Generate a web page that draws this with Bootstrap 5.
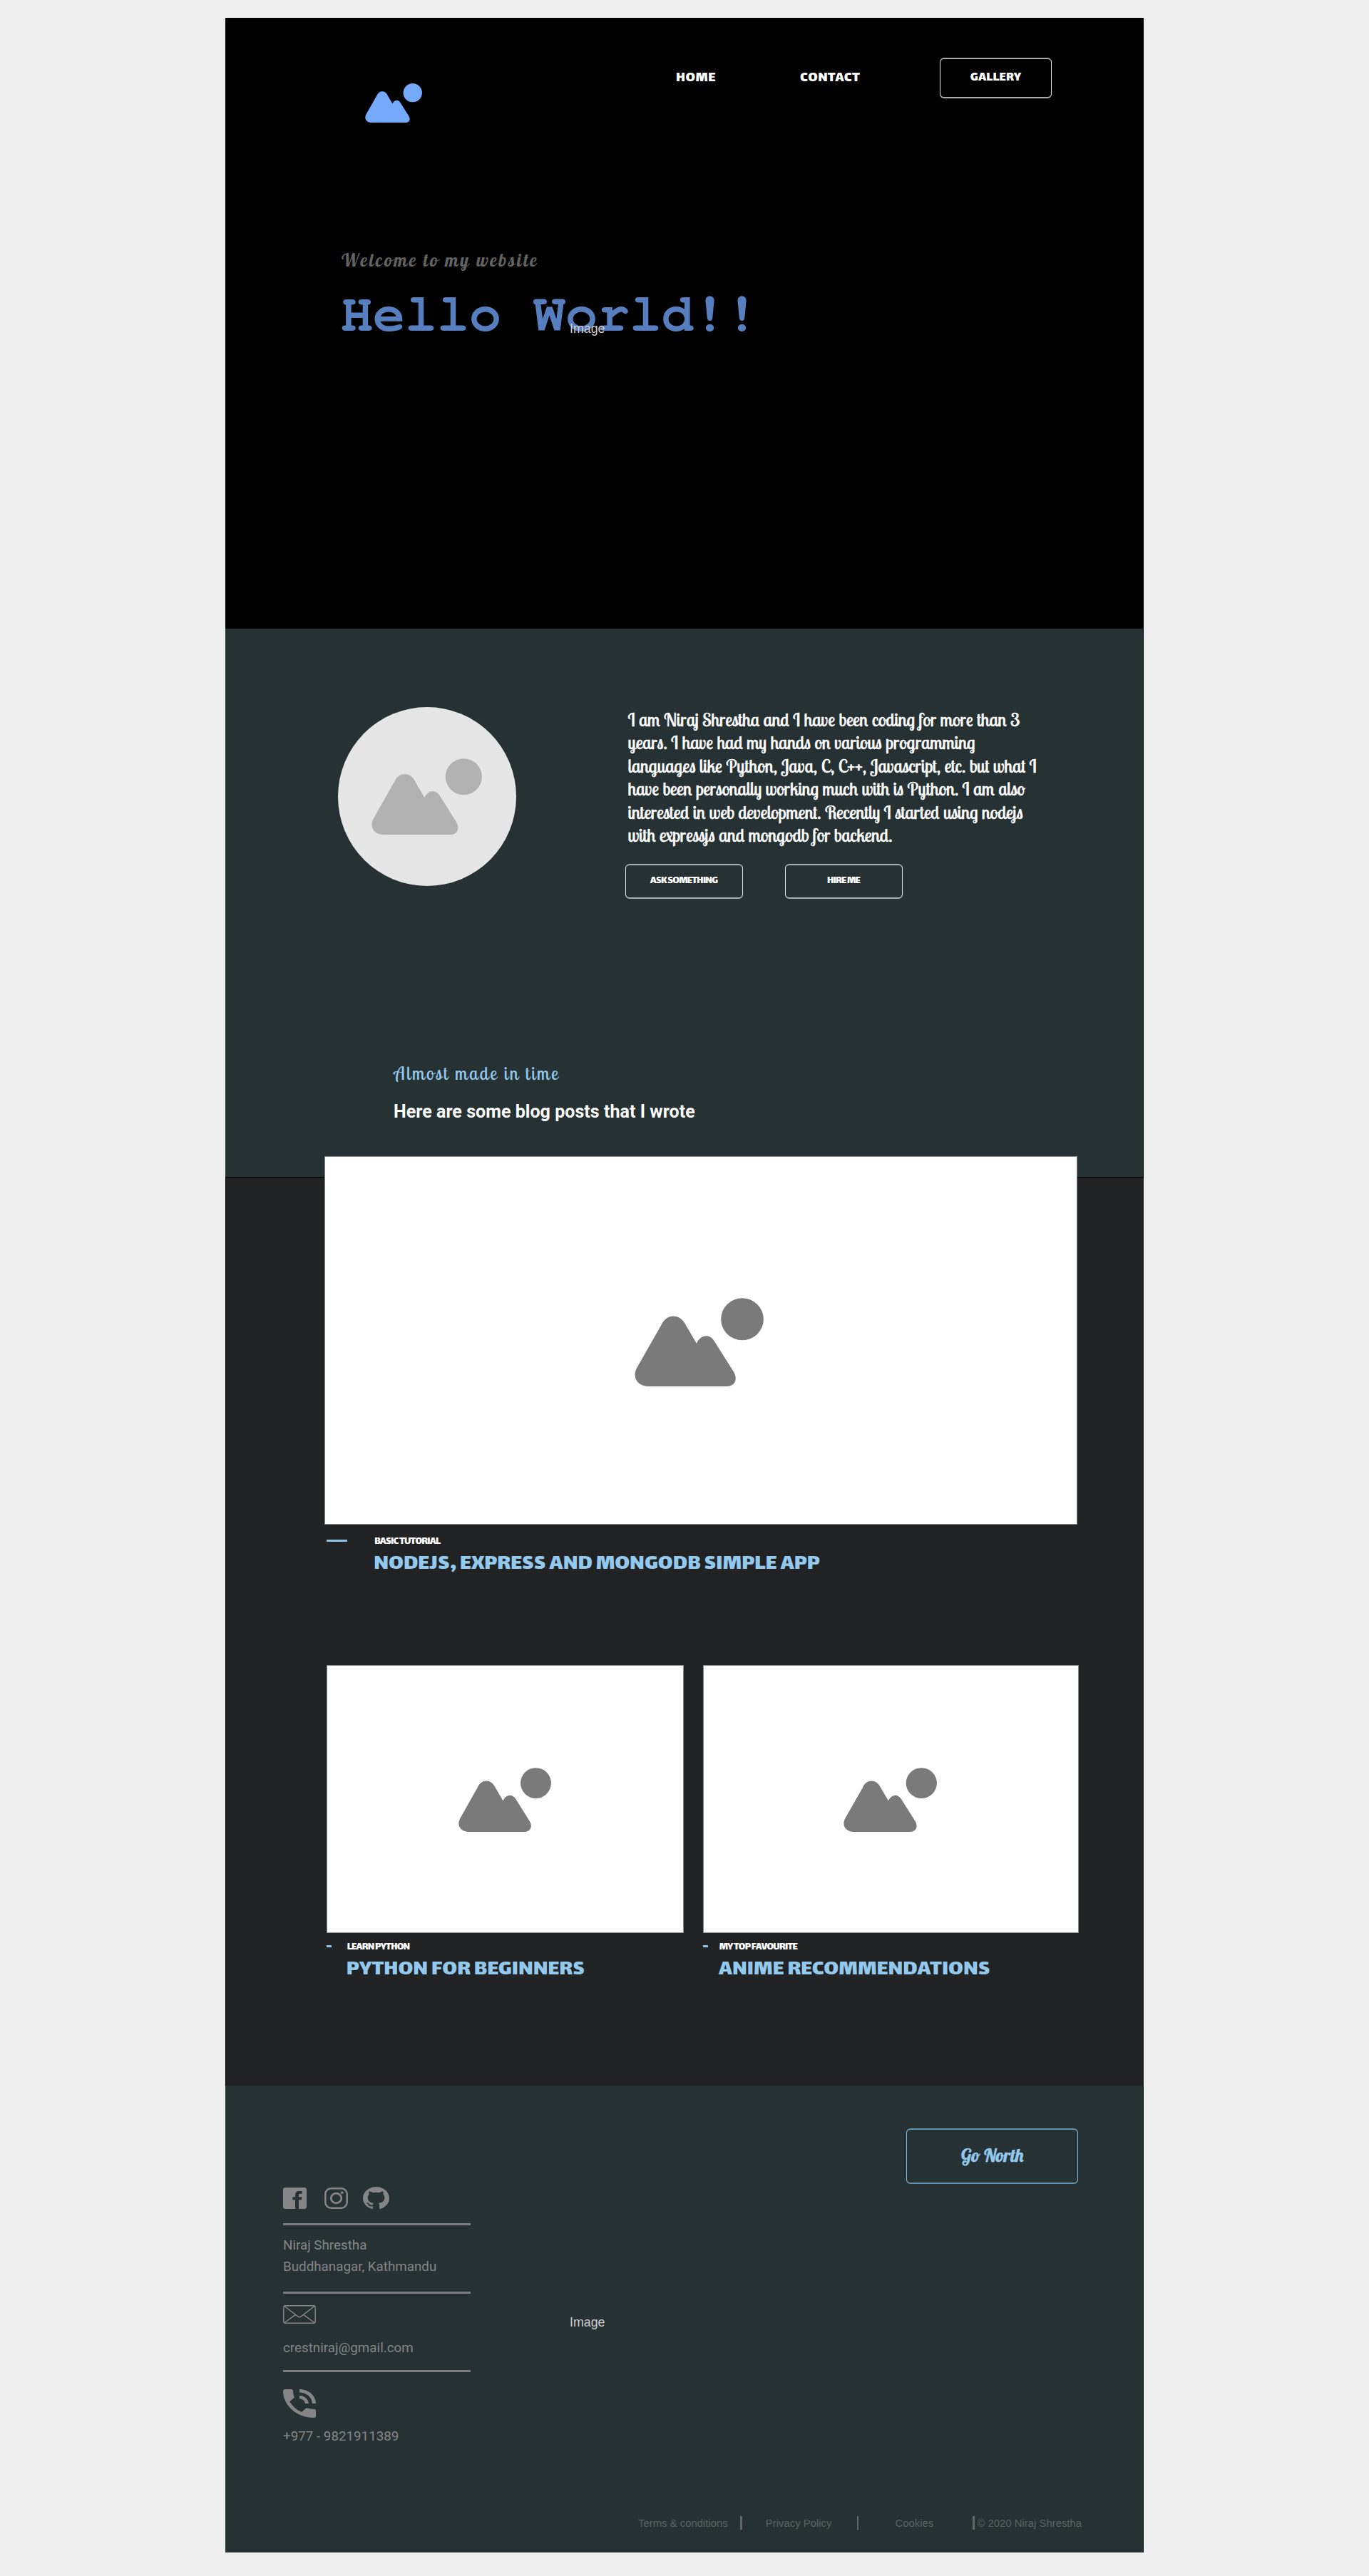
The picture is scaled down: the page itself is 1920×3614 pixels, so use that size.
<!DOCTYPE html>
<html lang="en">
<head>
<meta charset="utf-8">
<meta name="viewport" content="width=device-width, initial-scale=1">
<title>Niraj Shrestha</title>
<link href="https://cdn.jsdelivr.net/npm/bootstrap@5.3.0/dist/css/bootstrap.min.css" rel="stylesheet">
<style>
body{background:#eee;font-family:Roboto,sans-serif}
svg{display:block;flex-shrink:0}
.frame{width:1288px;margin:25px auto 33px}
.black-heading{font-family:Lalezar,"Open Sans",sans-serif;font-weight:400;color:#fff;white-space:nowrap}
.script{font-family:Lobster,"Liberation Serif",serif;white-space:nowrap}
.script-two{font-family:"Lobster Two",Lobster,"Liberation Serif",serif;white-space:nowrap}
.sky{color:#94c9ee}
.plain-img{font:17.8px/20px "Liberation Sans",sans-serif;color:#ccc}
.btn-line{display:flex;align-items:center;justify-content:center;border-style:solid;border-width:2px 1px;border-color:#a9adad #e4e6e6;border-radius:6px;padding:0}

.hero{height:857px;background:#000;padding-top:56px}
.hero-nav{height:91px;padding-left:196px}
.logo{margin:36px 356px 0 0;color:#75a9fc}
.hero-nav .nav-link{padding:0;font-size:21px;line-height:58px;letter-spacing:.45px;color:#fff}
.link-home{width:174px}
.link-contact{width:196px}
.btn-gallery{width:157px;height:57px;font-size:19px;letter-spacing:.1px}
.welcome{margin:173px 0 0 163px;font-size:25px;line-height:40px;letter-spacing:2.5px;color:#616161}
.hello{margin:19px 0 0 162px;font:700 75px/76px FreeMono,"Liberation Mono",monospace;color:#577fbf}
.hero-img{left:483px;top:426px}

.about{height:769px;background:#263133;border-right:1px solid #000;padding:110px 0 0 157.5px}
.avatar{width:250px;height:251px;background:#e6e6e6;color:#b2b2b2;margin-right:153px}
.bio{margin:2px 0 24px 4px;font-size:25px;line-height:32.4px;color:#fff;height:194.4px;-webkit-text-stroke:.4px currentColor}
.btn-sm-line{width:165px;height:48.5px;font-size:15px;letter-spacing:-.75px}
.almost{margin:227px 0 0 79px;font-size:25px;line-height:36px;letter-spacing:2.5px}
.here{margin:18px 0 0 78.5px;font-size:25px;line-height:36px;font-weight:700;color:#fff;letter-spacing:.04px}

.blog{height:1274.5px;background:#212224;border-top:2px solid #0b0b0c;border-left:1px solid #000;padding-left:137.7px}
.shot{background:#fff;border:1px solid #8a8a8a;color:#7a7a7a;display:flex;align-items:center;justify-content:center}
.shot-lg{width:1056.6px;height:517.5px;margin-top:-31.5px;padding:6px 4px 0 0}
.shot-a{width:501px;height:376px;padding:3px 2px 0 0}
.shot-b{width:527px;height:376px;padding:3px 1px 0 0}
.dash{height:3px;background:#8fc3e6;margin-top:7px;flex-shrink:0}
.kicker{font-size:15px;line-height:20px;letter-spacing:-.75px}
.post-title{font-size:32.5px;line-height:34px;margin:4.7px 0 0 -1px}

.foot{height:655.5px;background:#263133;border-right:1px solid #111;padding:60px 90.6px 0 81px;color:#858585}
.contact{width:263px;padding-top:82.5px;font-size:18.8px;line-height:30px}
.rule{height:3px;background:#7d7d7f}
.foot-img{margin:262.5px 0 0 139px}
.btn-north{width:241.5px;height:78px;border-color:#6394b4 #86b9da;font-size:25px;padding-bottom:2px;-webkit-text-stroke:.5px currentColor}
.legal{margin:97px -20px 0 498px;height:20px;font:14.9px/21px "Liberation Sans",sans-serif;color:#5c6061;white-space:nowrap}
.bar{width:2.6px;height:19px;background:#666668;flex-shrink:0}
</style>
</head>
<body>
<svg width="0" height="0" class="position-absolute" aria-hidden="true">
  <symbol id="pic" viewBox="0 0 154.6 107" preserveAspectRatio="none">
    <path fill="currentColor" d="M2.5 85L31.8 33C38 18.4 54.5 18.4 61.1 32.4L74.2 55C79 45 89.5 42 96 53L118.5 89C124 98 120.5 107 110.3 107H17.5C3 107-3 96 2.5 85Z"/>
    <circle fill="currentColor" cx="129" cy="25.7" r="25.5"/>
  </symbol>
</svg>
<main class="frame">
  <header class="hero position-relative">
    <nav class="hero-nav d-flex align-items-start">
      <svg class="logo" width="80" height="55"><use href="#pic"/></svg>
      <a class="nav-link black-heading link-home" href="#">HOME</a>
      <a class="nav-link black-heading link-contact" href="#">CONTACT</a>
      <a class="btn btn-line btn-gallery black-heading" href="#">GALLERY</a>
    </nav>
    <p class="welcome script">Welcome to my website</p>
    <h1 class="hello mb-0">Hello World!!</h1>
    <span class="plain-img hero-img position-absolute">Image</span>
  </header>

  <section class="about">
    <div class="d-flex align-items-start">
      <div class="avatar rounded-circle d-flex align-items-center justify-content-center flex-shrink-0"><svg width="155" height="107"><use href="#pic"/></svg></div>
      <div>
        <p class="bio script-two">I am Niraj Shrestha and I have been coding for more than 3<br>years. I have had my hands on various programming<br>languages like Python, Java, C, C++, Javascript, etc. but what I<br>have been personally working much with is Python. I am also<br>interested in web development. Recently I started using nodejs<br>with expressjs and mongodb for backend.</p>
        <div class="d-flex" style="gap:59px">
          <a class="btn btn-line btn-sm-line black-heading" href="#">ASK SOMETHING</a>
          <a class="btn btn-line btn-sm-line black-heading" href="#">HIRE ME</a>
        </div>
      </div>
    </div>
    <p class="almost script-two sky">Almost made in time</p>
    <h2 class="here mb-0">Here are some blog posts that I wrote</h2>
  </section>

  <section class="blog">
    <div class="shot shot-lg position-relative"><svg width="181" height="124"><use href="#pic"/></svg></div>
    <div class="d-flex" style="margin:14px 0 0 3.5px">
      <span class="dash" style="width:29px;margin-right:38px"></span>
      <div><div class="kicker black-heading">BASIC TUTORIAL</div><h3 class="post-title black-heading sky">NODEJS, EXPRESS AND MONGODB SIMPLE APP</h3></div>
    </div>
    <div class="d-flex" style="gap:26.5px;margin:124.3px 0 0 3.5px">
      <article>
        <div class="shot shot-a"><svg width="130" height="90"><use href="#pic"/></svg></div>
        <div class="d-flex" style="margin-top:10px">
          <span class="dash" style="width:7px;margin-right:21.5px"></span>
          <div><div class="kicker black-heading">LEARN PYTHON</div><h3 class="post-title black-heading sky">PYTHON FOR BEGINNERS</h3></div>
        </div>
      </article>
      <article>
        <div class="shot shot-b"><svg width="131" height="90"><use href="#pic"/></svg></div>
        <div class="d-flex" style="margin-top:10px">
          <span class="dash" style="width:7px;margin-right:16px"></span>
          <div><div class="kicker black-heading">MY TOP FAVOURITE</div><h3 class="post-title black-heading sky">ANIME RECOMMENDATIONS</h3></div>
        </div>
      </article>
    </div>
  </section>

  <footer class="foot">
    <div class="d-flex align-items-start">
      <div class="contact">
        <div class="d-flex align-items-end" style="height:31px">
          <svg width="33" height="30" viewBox="0 0 33 29.5" preserveAspectRatio="none" style="margin-right:24.5px"><rect width="33" height="29.5" rx="3" fill="#858585"/><path fill="#263133" d="M17 29.5V17h-3.6v-4H17v-2.5C17 7 19 5 22.5 5h4.2v3.6H24c-1.4 0-2 .7-2 2V13h4.4l-.5 4H22v12.5z"/></svg>
          <svg width="33" height="30" viewBox="0 0 33 30" style="margin-right:21.5px" fill="none" stroke="#858585"><rect x="1.3" y="1.3" width="30.4" height="27.4" rx="8" stroke-width="2.5"/><ellipse cx="16.5" cy="15" rx="7.3" ry="6.8" stroke-width="2.7"/><circle cx="24.8" cy="7.2" r="1.9" fill="#858585" stroke="none"/></svg>
          <svg width="37" height="31" viewBox="0 0 16 15.6" preserveAspectRatio="none"><path fill="#858585" d="M8 0C3.580 0 0 3.580 0 8c0 3.540 2.290 6.530 5.470 7.590.4.070.55-.17.55-.38 0-.19-.01-.82-.01-1.490-2.010.37-2.530-.49-2.690-.94-.09-.23-.48-.94-.82-1.130-.28-.15-.68-.52-.01-.53.63-.01 1.080.58 1.230.82.72 1.210 1.870.87 2.330.66.07-.52.28-.87.51-1.070-1.780-.2-3.640-.89-3.640-3.950 0-.87.31-1.590.82-2.150-.08-.2-.36-1.020.08-2.120 0 0 .67-.21 2.200.82.64-.18 1.320-.27 2-.27s1.360.09 2 .27c1.530-1.040 2.200-.82 2.200-.82.44 1.100.16 1.920.08 2.120.51.56.82 1.270.82 2.150 0 3.070-1.870 3.750-3.650 3.950.29.25.54.73.54 1.480 0 1.070-.01 1.930-.01 2.200 0 .21.15.46.55.38A8.010 8.010 0 0 0 16 8c0-4.420-3.580-8-8-8z"/></svg>
        </div>
        <div class="rule" style="margin:20px 0 13px"></div>
        <div>Niraj Shrestha</div>
        <div>Buddhanagar, Kathmandu</div>
        <div class="rule" style="margin:20px 0 15.5px"></div>
        <svg width="46" height="26" viewBox="0 0 46 26" fill="none" stroke="#858585" stroke-width="1.5"><rect x=".8" y=".8" width="44.4" height="24.4" rx="2.5"/><path d="M2 1.500L20.800 15.800Q23 17.800 25.200 15.800L44 1.500M2 24.500L17.500 13.400M44 24.500L28.500 13.400"/></svg>
        <div style="margin-top:19.5px">crestniraj@gmail.com</div>
        <div class="rule" style="margin:16px 0 24px"></div>
        <svg width="46" height="40" viewBox="3 3 18 18" preserveAspectRatio="none"><path fill="#858585" d="M20 15.500c-1.250 0-2.450-.2-3.570-.57-.35-.11-.74-.03-1.020.24l-2.200 2.200c-2.830-1.440-5.150-3.750-6.590-6.590l2.200-2.210c.28-.26.36-.65.25-1C8.700 6.450 8.500 5.250 8.500 4c0-.55-.45-1-1-1H4c-.55 0-1 .45-1 1 0 9.390 7.610 17 17 17 .55 0 1-.45 1-1v-3.500c0-.55-.45-1-1-1zM19 12h2c0-4.970-4.030-9-9-9v2c3.870 0 7 3.130 7 7zm-4 0h2c0-2.760-2.240-5-5-5v2c1.660 0 3 1.340 3 3z"/></svg>
        <div style="margin-top:10.5px">+977 - 9821911389</div>
      </div>
      <span class="plain-img foot-img">Image</span>
      <a class="btn btn-line btn-north script sky ms-auto" href="#">Go North</a>
    </div>
    <div class="legal d-flex align-items-start">
      <span style="width:143.4px">Terms &amp; conditions</span><i class="bar"></i>
      <span style="width:127.9px;margin-left:32.8px">Privacy Policy</span><i class="bar"></i>
      <span style="width:108.5px;margin-left:51.2px">Cookies</span><i class="bar"></i>
      <span style="margin-left:3.8px">© 2020 Niraj Shrestha</span>
    </div>
  </footer>
</main>
<script src="https://cdn.jsdelivr.net/npm/bootstrap@5.3.0/dist/js/bootstrap.bundle.min.js"></script>
</body>
</html>
